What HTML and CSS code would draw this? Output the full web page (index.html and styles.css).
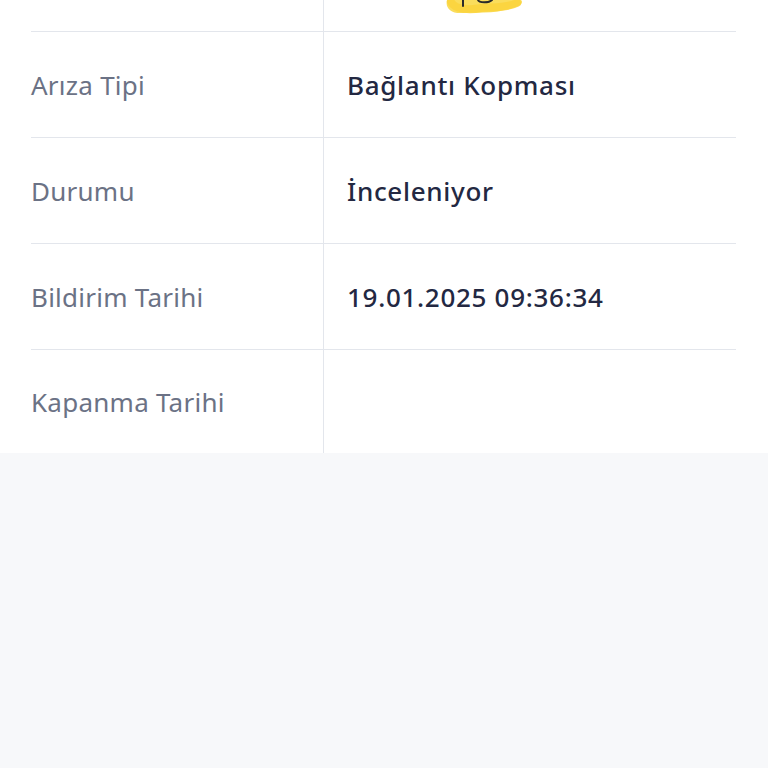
FILE: index.html
```html
<!DOCTYPE html>
<html lang="tr">
<head>
<meta charset="utf-8">
<link rel="stylesheet" href="styles.css">
</head>
<body>
<div class="sheet">
  <div class="row row-top">
    <div class="label"></div>
    <div class="value">
      <svg class="scribble" width="90" height="18" viewBox="0 0 90 18">
        <path d="M6 0 C4 8 10 14 22 13 C36 12 50 14 64 10 C76 8 84 4 80 0 Z" fill="#f9d94a" opacity="0.9"/>
        <path d="M10 2 C14 10 30 10 40 8 C52 7 66 8 76 3" stroke="#fbd33a" stroke-width="8" fill="none" stroke-linecap="round" opacity="0.8"/>
        <path d="M22 0 L22 6" stroke="#2a2a2a" stroke-width="2" fill="none" stroke-linecap="round"/>
        <path d="M37 0 C38 3 48 3 51 0" stroke="#2a2a2a" stroke-width="2" fill="none" stroke-linecap="round"/>
      </svg>
    </div>
  </div>
  <div class="row">
    <div class="label">Arıza Tipi</div>
    <div class="value">Bağlantı Kopması</div>
  </div>
  <div class="row">
    <div class="label">Durumu</div>
    <div class="value">İnceleniyor</div>
  </div>
  <div class="row">
    <div class="label">Bildirim Tarihi</div>
    <div class="value">19.01.2025 09:36:34</div>
  </div>
  <div class="row row-last">
    <div class="label">Kapanma Tarihi</div>
    <div class="value"></div>
  </div>
</div>
</body>
</html>
```
FILE: styles.css
```css
html, body {
  margin: 0;
  padding: 0;
  background: #f7f8fa;
  font-family: "Noto Sans", Lato, sans-serif;
}
.sheet {
  background: #ffffff;
  padding: 0 32px 0 31px;
}
.row {
  display: grid;
  grid-template-columns: 293px 1fr;
  height: 106px;
  border-bottom: 1px solid #e3e6ec;
  box-sizing: border-box;
}
.row-top {
  height: 32px;
}
.row-last {
  border-bottom: none;
  height: 103px;
}
.label {
  display: flex;
  align-items: center;
  font-size: 26px;
  letter-spacing: 0.25px;
  color: #6b7285;
  border-right: 1px solid #e3e6ec;
}
.value {
  display: flex;
  align-items: center;
  padding-left: 23px;
  font-size: 26px;
  letter-spacing: 0.7px;
  font-weight: 500;
  color: #232842;
}
.row-top .value {
  align-items: flex-start;
  padding-left: 117px;
}
.scribble {
  display: block;
}
```
